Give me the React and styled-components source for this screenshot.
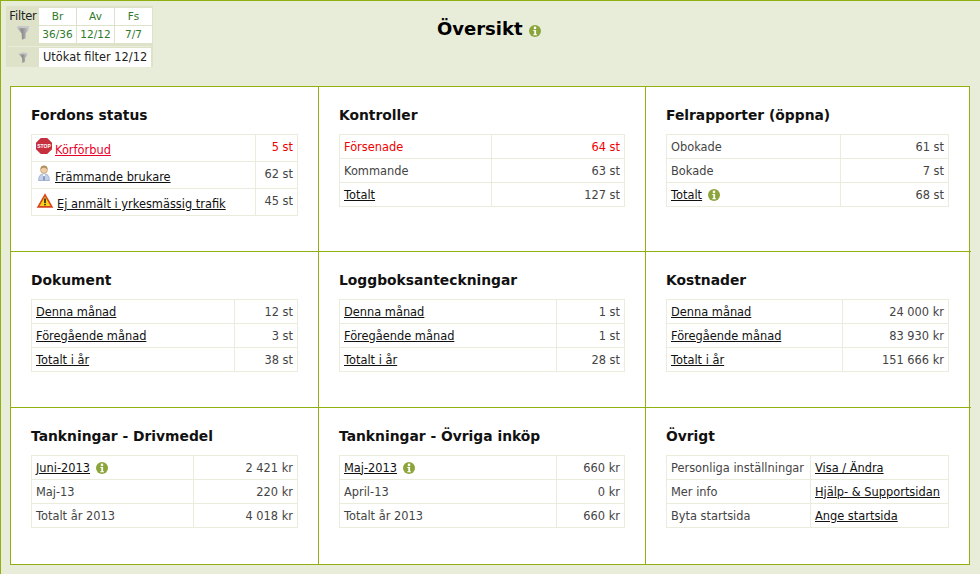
import styled, { createGlobalStyle } from "styled-components";

const GlobalStyle = createGlobalStyle`
    html, body {
        margin: 0;
        padding: 0;
        background: #e8edda;
    }
    body {
        font-family: "DejaVu Sans", Verdana, sans-serif;
        font-size: 11.4px;
        color: #444;
    }
`

function InfoIcon({ size = 12, $gap = 0 }) {
    return (
        <InfoSvg width={size} height={size} viewBox="0 0 12 12" $gap={$gap}>
            <circle cx="6" cy="6" r="6" fill="#8ba53a" />
            <circle cx="6" cy="2.900" r="1.300" fill="#fff" />
            <path d="M4.300 5h2.800v4.200h.9v1H4.300v-1h1v-3.200h-1z" fill="#fff" />
        </InfoSvg>
    )
}

function FunnelIcon({ size = 15, id }) {
    return (
        <svg width={size} height={size} viewBox="0 0 20 20">
            <defs>
                <linearGradient id={id} x1="0" x2="1" y1="0" y2="0">
                    <stop offset="0" stopColor="#dcdcdc" />
                    <stop offset="0.4" stopColor="#8c8c8c" />
                    <stop offset="0.75" stopColor="#bdbdbd" />
                    <stop offset="1" stopColor="#f3f3f3" />
                </linearGradient>
            </defs>
            <path d="M0 2.500 Q10 0 20 2.500 L13 11 L12.800 17.500 L8 19.800 L7.500 11 Z" fill={`url(#${id})`} />
            <ellipse cx="10" cy="2.800" rx="8.500" ry="1.400" fill="#c9c9c9" />
        </svg>
    )
}

function StopIcon() {
    return (
        <RowIcon width="16" height="16" viewBox="0 0 16 16">
            <path d="M4.800 0h6.400L16 4.800v6.400L11.200 16H4.800L0 11.200V4.800z" fill="#c62f3e" />
            <StopText x="8" y="9.800">STOP</StopText>
        </RowIcon>
    )
}

function PersonIcon() {
    return (
        <RowIcon width="16" height="16" viewBox="0 0 15 18">
            <path d="M1.500 17.500c0-5.500 2-7.500 6-7.500s6 2 6 7.500z" fill="#c3d0e8" stroke="#7f93bb" strokeWidth="0.700" />
            <path d="M6 10.500h3L7.500 14z" fill="#fff" />
            <rect x="6.900" y="12.500" width="1.200" height="4.500" fill="#4d6ea8" />
            <circle cx="7.500" cy="5.500" r="3.900" fill="#f0cda5" stroke="#a98a60" strokeWidth="0.600" />
            <path d="M3.500 5c0-3.500 1.800-4.500 4-4.500s4 1 4 4.500C10 3.500 8.500 3 7 3S4.500 4 3.500 5z" fill="#b0925f" />
        </RowIcon>
    )
}

function WarningIcon() {
    return (
        <RowIcon width="18" height="16" viewBox="0 -1 17 16">
            <path d="M8.500 0.300L16.800 14.700H0.200z" fill="#d7431d" />
            <path d="M8.500 3.500L14 13H3z" fill="#f8d41f" />
            <rect x="7.700" y="5.500" width="1.600" height="4.500" fill="#222" />
            <rect x="7.700" y="10.800" width="1.600" height="1.500" fill="#222" />
        </RowIcon>
    )
}

const sections = [
    {
        title: "Fordons status", labelWidth: 224, tall: true, rows: [
            { icon: <StopIcon />, label: "Körförbud", link: true, alert: true, value: "5 st" },
            { icon: <PersonIcon />, label: "Främmande brukare", link: true, value: "62 st" },
            { icon: <WarningIcon />, label: "Ej anmält i yrkesmässig trafik", link: true, value: "45 st" },
        ]
    },
    {
        title: "Kontroller", labelWidth: 152, rows: [
            { label: "Försenade", alert: true, value: "64 st" },
            { label: "Kommande", value: "63 st" },
            { label: "Totalt", link: true, value: "127 st" },
        ]
    },
    {
        title: "Felrapporter (öppna)", labelWidth: 174, rows: [
            { label: "Obokade", value: "61 st" },
            { label: "Bokade", value: "7 st" },
            { label: "Totalt", link: true, info: true, value: "68 st" },
        ]
    },
    {
        title: "Dokument", labelWidth: 203, rows: [
            { label: "Denna månad", link: true, value: "12 st" },
            { label: "Föregående månad", link: true, value: "3 st" },
            { label: "Totalt i år", link: true, value: "38 st" },
        ]
    },
    {
        title: "Loggboksanteckningar", labelWidth: 217, rows: [
            { label: "Denna månad", link: true, value: "1 st" },
            { label: "Föregående månad", link: true, value: "1 st" },
            { label: "Totalt i år", link: true, value: "28 st" },
        ]
    },
    {
        title: "Kostnader", labelWidth: 176, rows: [
            { label: "Denna månad", link: true, value: "24 000 kr" },
            { label: "Föregående månad", link: true, value: "83 930 kr" },
            { label: "Totalt i år", link: true, value: "151 666 kr" },
        ]
    },
    {
        title: "Tankningar - Drivmedel", labelWidth: 162, rows: [
            { label: "Juni-2013", link: true, info: true, value: "2 421 kr" },
            { label: "Maj-13", value: "220 kr" },
            { label: "Totalt år 2013", value: "4 018 kr" },
        ]
    },
    {
        title: "Tankningar - Övriga inköp", labelWidth: 217, rows: [
            { label: "Maj-2013", link: true, info: true, value: "660 kr" },
            { label: "April-13", value: "0 kr" },
            { label: "Totalt år 2013", value: "660 kr" },
        ]
    },
    {
        title: "Övrigt", labelWidth: 144, linkValues: true, rows: [
            { label: "Personliga inställningar", value: "Visa / Ändra" },
            { label: "Mer info", value: "Hjälp- & Supportsidan" },
            { label: "Byta startsida", value: "Ange startsida" },
        ]
    },
]

const tableWidths = [267, 286, 283]

export default function App() {
    return (
        <Page>
            <GlobalStyle />
            <Header>
                <FilterPanel>
                    <FilterTop>
                        <FilterLabel>
                            <span>Filter</span>
                            <FunnelIcon id="funnelBig" />
                        </FilterLabel>
                        <FilterHead>Br</FilterHead>
                        <FilterHead>Av</FilterHead>
                        <FilterHead>Fs</FilterHead>
                        <FilterHead>36/36</FilterHead>
                        <FilterHead>12/12</FilterHead>
                        <FilterHead>7/7</FilterHead>
                    </FilterTop>
                    <FilterBottom>
                        <FilterIconBox><FunnelIcon size={11} id="funnelSmall" /></FilterIconBox>
                        <ExtendedFilter>Utökat filter 12/12</ExtendedFilter>
                    </FilterBottom>
                </FilterPanel>
                <Title>Översikt <InfoIcon /></Title>
            </Header>
            <Board>
                {sections.map((section, i) => (
                    <Cell key={section.title} $noRight={i % 3 === 2} $noBottom={i > 5}>
                        <CellTitle>{section.title}</CellTitle>
                        <StatTable style={{ width: tableWidths[i % 3] }}>
                            <colgroup>
                                <col style={{ width: section.labelWidth }} />
                                <col />
                            </colgroup>
                            <tbody>
                                {section.rows.map(row => (
                                    <tr key={row.label}>
                                        <LabelCell $tall={section.tall} $alert={row.alert}>
                                            {row.icon}
                                            {row.link ? <RowLink $alert={row.alert}>{row.label}</RowLink> : row.label}
                                            {row.info && <InfoIcon $gap={2} />}
                                        </LabelCell>
                                        {section.linkValues ?
                                            <LinkValueCell><RowLink>{row.value}</RowLink></LinkValueCell> :
                                            <ValueCell $tall={section.tall} $alert={row.alert}>{row.value}</ValueCell>
                                        }
                                    </tr>
                                ))}
                            </tbody>
                        </StatTable>
                    </Cell>
                ))}
            </Board>
        </Page>
    )
}

const Page = styled.main`
    box-sizing: border-box;
    width: 980px;
    height: 574px;
    overflow: hidden;
    border-top: 1px solid #8fb00f;
    border-left: 1px solid #8fb00f;
    padding: 5px 0 0 5px;
`
const Header = styled.header`
    display: flex;
    height: 80px;
`
const FilterPanel = styled.div`
    box-sizing: border-box;
    width: 147px;
    height: 61px;
    background: #dde2c8;
    padding: 2px;
    display: flex;
    flex-direction: column;
    gap: 3px;
`
const FilterTop = styled.div`
    display: grid;
    grid-template-columns: 30px 37px 37px 37px;
    grid-auto-rows: 17px;
    gap: 1px;
`
const FilterLabel = styled.div`
    grid-row: span 2;
    display: flex;
    flex-direction: column;
    align-items: center;
    font-size: 11.5px;
    line-height: 17px;
    color: #222;
    letter-spacing: -0.2px;
`
const FilterHead = styled.div`
    background: #fff;
    text-align: center;
    font-size: 10.5px;
    line-height: 17px;
    color: #2f7a2a;
`
const FilterBottom = styled.div`
    display: flex;
    height: 19px;
    border-top: 1px solid #e8edda;
    padding-top: 1px;
    gap: 1px;
`
const FilterIconBox = styled.div`
    width: 30px;
    display: flex;
    justify-content: center;
    align-items: center;
`
const ExtendedFilter = styled.div`
    flex: 1;
    background: #fff;
    font-size: 11.4px;
    line-height: 19px;
    padding-left: 4px;
    color: #222;
`
const Title = styled.h1`
    margin: 7px 0 0 284px;
    font-size: 18px;
    line-height: 32px;
    font-weight: bold;
    color: #000;
    white-space: nowrap;
`
const InfoSvg = styled.svg`
    vertical-align: -2px;
    margin-left: ${props => props.$gap}px;
`
const RowIcon = styled.svg`
    vertical-align: 0;
    margin-right: 3px;
`
const StopText = styled.text`
    font-family: "Liberation Sans", Arial, sans-serif;
    font-size: 5px;
    font-weight: bold;
    fill: #fff;
    text-anchor: middle;
`
const Board = styled.div`
    display: grid;
    grid-template-columns: 308px 327px 325px;
    grid-template-rows: 165px 156px 156px;
    margin-left: 4px;
    width: 960px;
    box-sizing: border-box;
    background: #fff;
    border: 1px solid #8fb00f;
`
const Cell = styled.section`
    box-sizing: border-box;
    padding: 19px 0 0 20px;
    border-right: ${props => props.$noRight ? "none" : "1px solid #8fb00f"};
    border-bottom: ${props => props.$noBottom ? "none" : "1px solid #8fb00f"};
`
const CellTitle = styled.h2`
    margin: 0 0 10px;
    font-size: 13.85px;
    line-height: 18px;
    font-weight: bold;
    color: #111;
`
const StatTable = styled.table`
    border-collapse: collapse;
    table-layout: fixed;
    td {
        border: 1px solid #eaeddc;
        box-sizing: border-box;
    }
`
const LabelCell = styled.td`
    padding: ${props => props.$tall ? "3px 4px 0" : "0 4px"};
    height: ${props => props.$tall ? "27px" : "24px"};
    vertical-align: ${props => props.$tall ? "top" : "middle"};
    color: ${props => props.$alert ? "#f00000" : "#444"};
    white-space: nowrap;
`
const ValueCell = styled.td`
    padding: ${props => props.$tall ? "5px 4px 0" : "0 4px"};
    vertical-align: ${props => props.$tall ? "top" : "middle"};
    text-align: right;
    color: ${props => props.$alert ? "#f00000" : "#444"};
    white-space: nowrap;
`
const LinkValueCell = styled.td`
    padding: 0 4px;
    white-space: nowrap;
`
const RowLink = styled.a`
    color: ${props => props.$alert ? "#e8002c" : "#111"};
    text-decoration: underline;
    margin-right: 4px;
`
